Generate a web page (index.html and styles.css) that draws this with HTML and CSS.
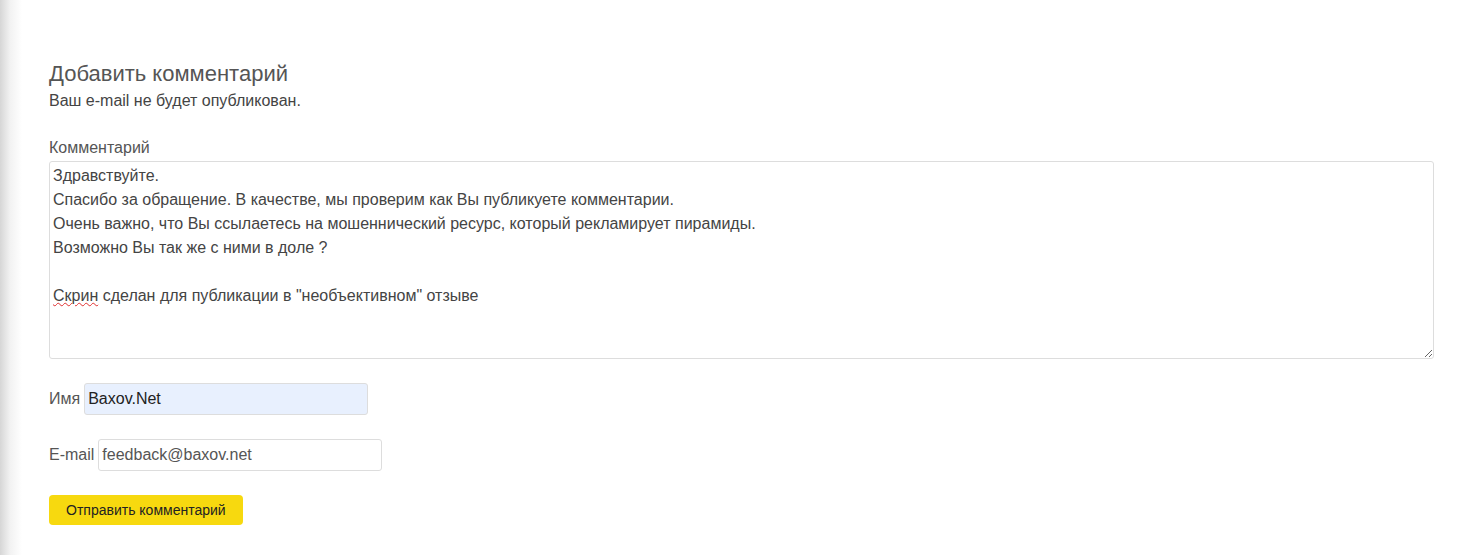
FILE: index.html
```html
<!DOCTYPE html>
<html lang="ru">
<head>
    <meta charset="UTF-8">
    <meta name="viewport" content="width=device-width, initial-scale=1.0">
    <title>Добавить комментарий</title>
    <link rel="stylesheet" href="styles.css">
</head>
<body>
    <div class="respond">
        <h3 class="reply-title">Добавить комментарий</h3>
        <p class="notes">Ваш e-mail не будет опубликован.</p>

        <form class="comment-form">
            <div class="field-comment">
                <label for="comment">Комментарий</label>
                <div id="comment" class="comment-box" contenteditable="true" spellcheck="false">
                    <div>Здравствуйте.</div>
                    <div>Спасибо за обращение. В качестве, мы проверим как Вы публикуете комментарии.</div>
                    <div>Очень важно, что Вы ссылаетесь на мошеннический ресурс, который рекламирует пирамиды.</div>
                    <div>Возможно Вы так же с ними в доле ?</div>
                    <div><br></div>
                    <div><span class="misspelled">Скрин</span> сделан для публикации в "необъективном" отзыве</div>
                </div>
            </div>
            <div class="field-row">
                <label for="author">Имя</label>
                <input type="text" id="author" class="autofilled" value="Baxov.Net">
            </div>
            <div class="field-row">
                <label for="email">E-mail</label>
                <input type="text" id="email" value="feedback@baxov.net">
            </div>
            <div class="form-submit">
                <button type="button" id="submit">Отправить комментарий</button>
            </div>
        </form>
    </div>
</body>
</html>
```

FILE: styles.css
```css
body {
    margin: 0;
    font-family: "Liberation Sans", Arial, sans-serif;
    color: #555;
    background: linear-gradient(to right, #d6d6d6 0, #f2f2f2 10px, #fff 22px);
    min-height: 555px;
}

.respond {
    padding: 62px 37px 0 49px;
}

.reply-title {
    margin: 0;
    font-size: 22px;
    font-weight: normal;
    line-height: 24px;
    color: #555;
}

.notes {
    margin: 6px 0 0;
    font-size: 16px;
    line-height: 18px;
    color: #444;
}

.comment-form {
    margin-top: 29px;
}

.field-comment label {
    display: block;
    font-size: 16px;
    line-height: 18px;
    color: #555;
    margin-bottom: 4px;
}

.comment-box {
    box-sizing: border-box;
    width: 100%;
    height: 198px;
    padding: 2px 3px;
    border: 1px solid #ddd;
    border-radius: 3px;
    background: #fff;
    font-size: 16px;
    line-height: 24px;
    color: #444;
    outline: none;
    overflow: auto;
    resize: both;
}

.misspelled {
    text-decoration: underline wavy #e03030;
    text-decoration-thickness: 1px;
    text-underline-offset: 1px;
}

.field-row {
    display: flex;
    align-items: center;
    gap: 4px;
    margin-top: 24px;
}

.field-row label {
    font-size: 16px;
    color: #555;
}

.field-row input {
    box-sizing: border-box;
    width: 284px;
    height: 32px;
    margin: 0;
    padding: 0 3px;
    border: 1px solid #ddd;
    border-radius: 3px;
    background: #fff;
    font-family: "Liberation Sans", Arial, sans-serif;
    font-size: 16px;
    color: #555;
    outline: none;
}

.field-row input.autofilled {
    background: #e8f0fe;
    color: #222;
}

.field-row + .field-row {
    margin-top: 24px;
}

.form-submit {
    margin-top: 24px;
}

#submit {
    height: 30px;
    padding: 0 17px;
    border: none;
    border-radius: 4px;
    background: #f7d90f;
    font-family: "Liberation Sans", Arial, sans-serif;
    font-size: 14px;
    color: #222;
}
```
